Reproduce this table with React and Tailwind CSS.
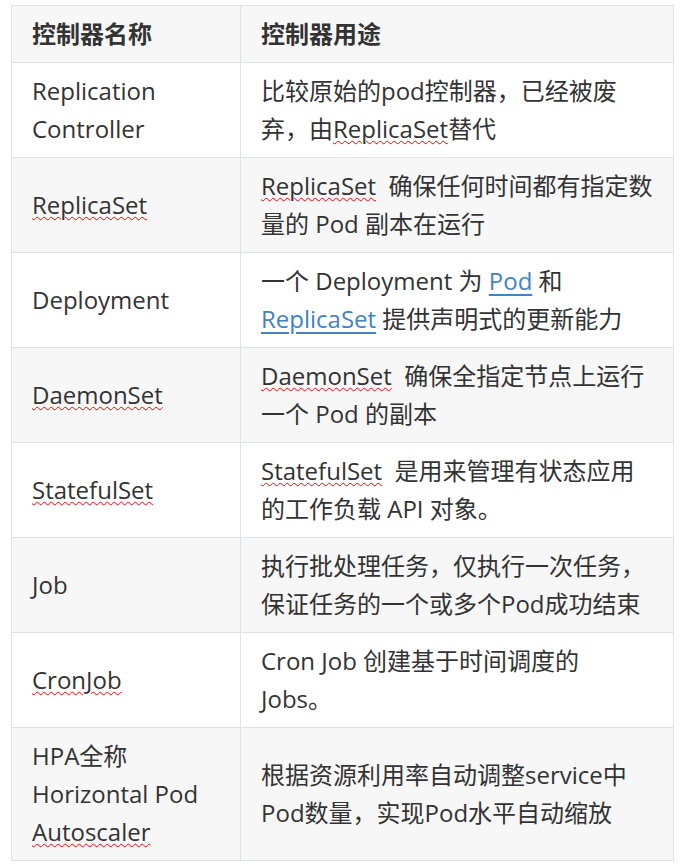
import React from "react";

const wavy = "underline decoration-wavy decoration-[#ff0000] decoration-1 underline-offset-[2px]";
const link = "text-[#4183c4] underline decoration-[#4183c4] underline-offset-[4px]";

function Row({ gray, left, right }) {
  return (
    <div className={`grid grid-cols-[229px_433px] ${gray ? "bg-[#f7f7f7]" : "bg-white"}`}>
      <div className="flex items-center border-r border-b border-[#dfe2e5] px-5 py-[9px]">
        <div>{left}</div>
      </div>
      <div className="flex items-center border-r border-b border-[#dfe2e5] px-5 py-[9px]">
        <div className="whitespace-nowrap">{right}</div>
      </div>
    </div>
  );
}

export default function App() {
  return (
    <div
      className="w-[682px] h-[866px] bg-white pt-[5px] pl-[11px] text-[24px] leading-[38px] text-[#333333]"
      style={{ fontFamily: '"Open Sans", "Noto Sans CJK SC", sans-serif' }}
    >
      <div className="w-[663px] border-l border-t border-[#dfe2e5]">
        <Row
          gray
          left={<span className="font-bold">控制器名称</span>}
          right={<span className="font-bold">控制器用途</span>}
        />
        <Row
          left={<>Replication<br />Controller</>}
          right={<>比较原始的pod控制器，已经被废<br />弃，由<span className={wavy}>ReplicaSet</span>替代</>}
        />
        <Row
          gray
          left={<span className={wavy}>ReplicaSet</span>}
          right={<><span className={wavy}>ReplicaSet</span>{"\u00a0 "}确保任何时间都有指定数<br />量的 Pod 副本在运行</>}
        />
        <Row
          left={<>Deployment</>}
          right={<>一个 Deployment 为 <span className={link}>Pod</span> 和<br /><span className={link}>ReplicaSet</span> 提供声明式的更新能力</>}
        />
        <Row
          gray
          left={<span className={wavy}>DaemonSet</span>}
          right={<><span className={wavy}>DaemonSet</span>{"\u00a0 "}确保全指定节点上运行<br />一个 Pod 的副本</>}
        />
        <Row
          left={<span className={wavy}>StatefulSet</span>}
          right={<><span className={wavy}>StatefulSet</span>{"\u00a0 "}是用来管理有状态应用<br />的工作负载 API 对象。</>}
        />
        <Row
          gray
          left={<>Job</>}
          right={<>执行批处理任务，仅执行一次任务，<br />保证任务的一个或多个Pod成功结束</>}
        />
        <Row
          left={<span className={wavy}>CronJob</span>}
          right={<>Cron Job 创建基于时间调度的<br />Jobs。</>}
        />
        <Row
          gray
          left={<>HPA全称<br />Horizontal Pod<br /><span className={wavy}>Autoscaler</span></>}
          right={<>根据资源利用率自动调整service中<br />Pod数量，实现Pod水平自动缩放</>}
        />
      </div>
    </div>
  );
}
